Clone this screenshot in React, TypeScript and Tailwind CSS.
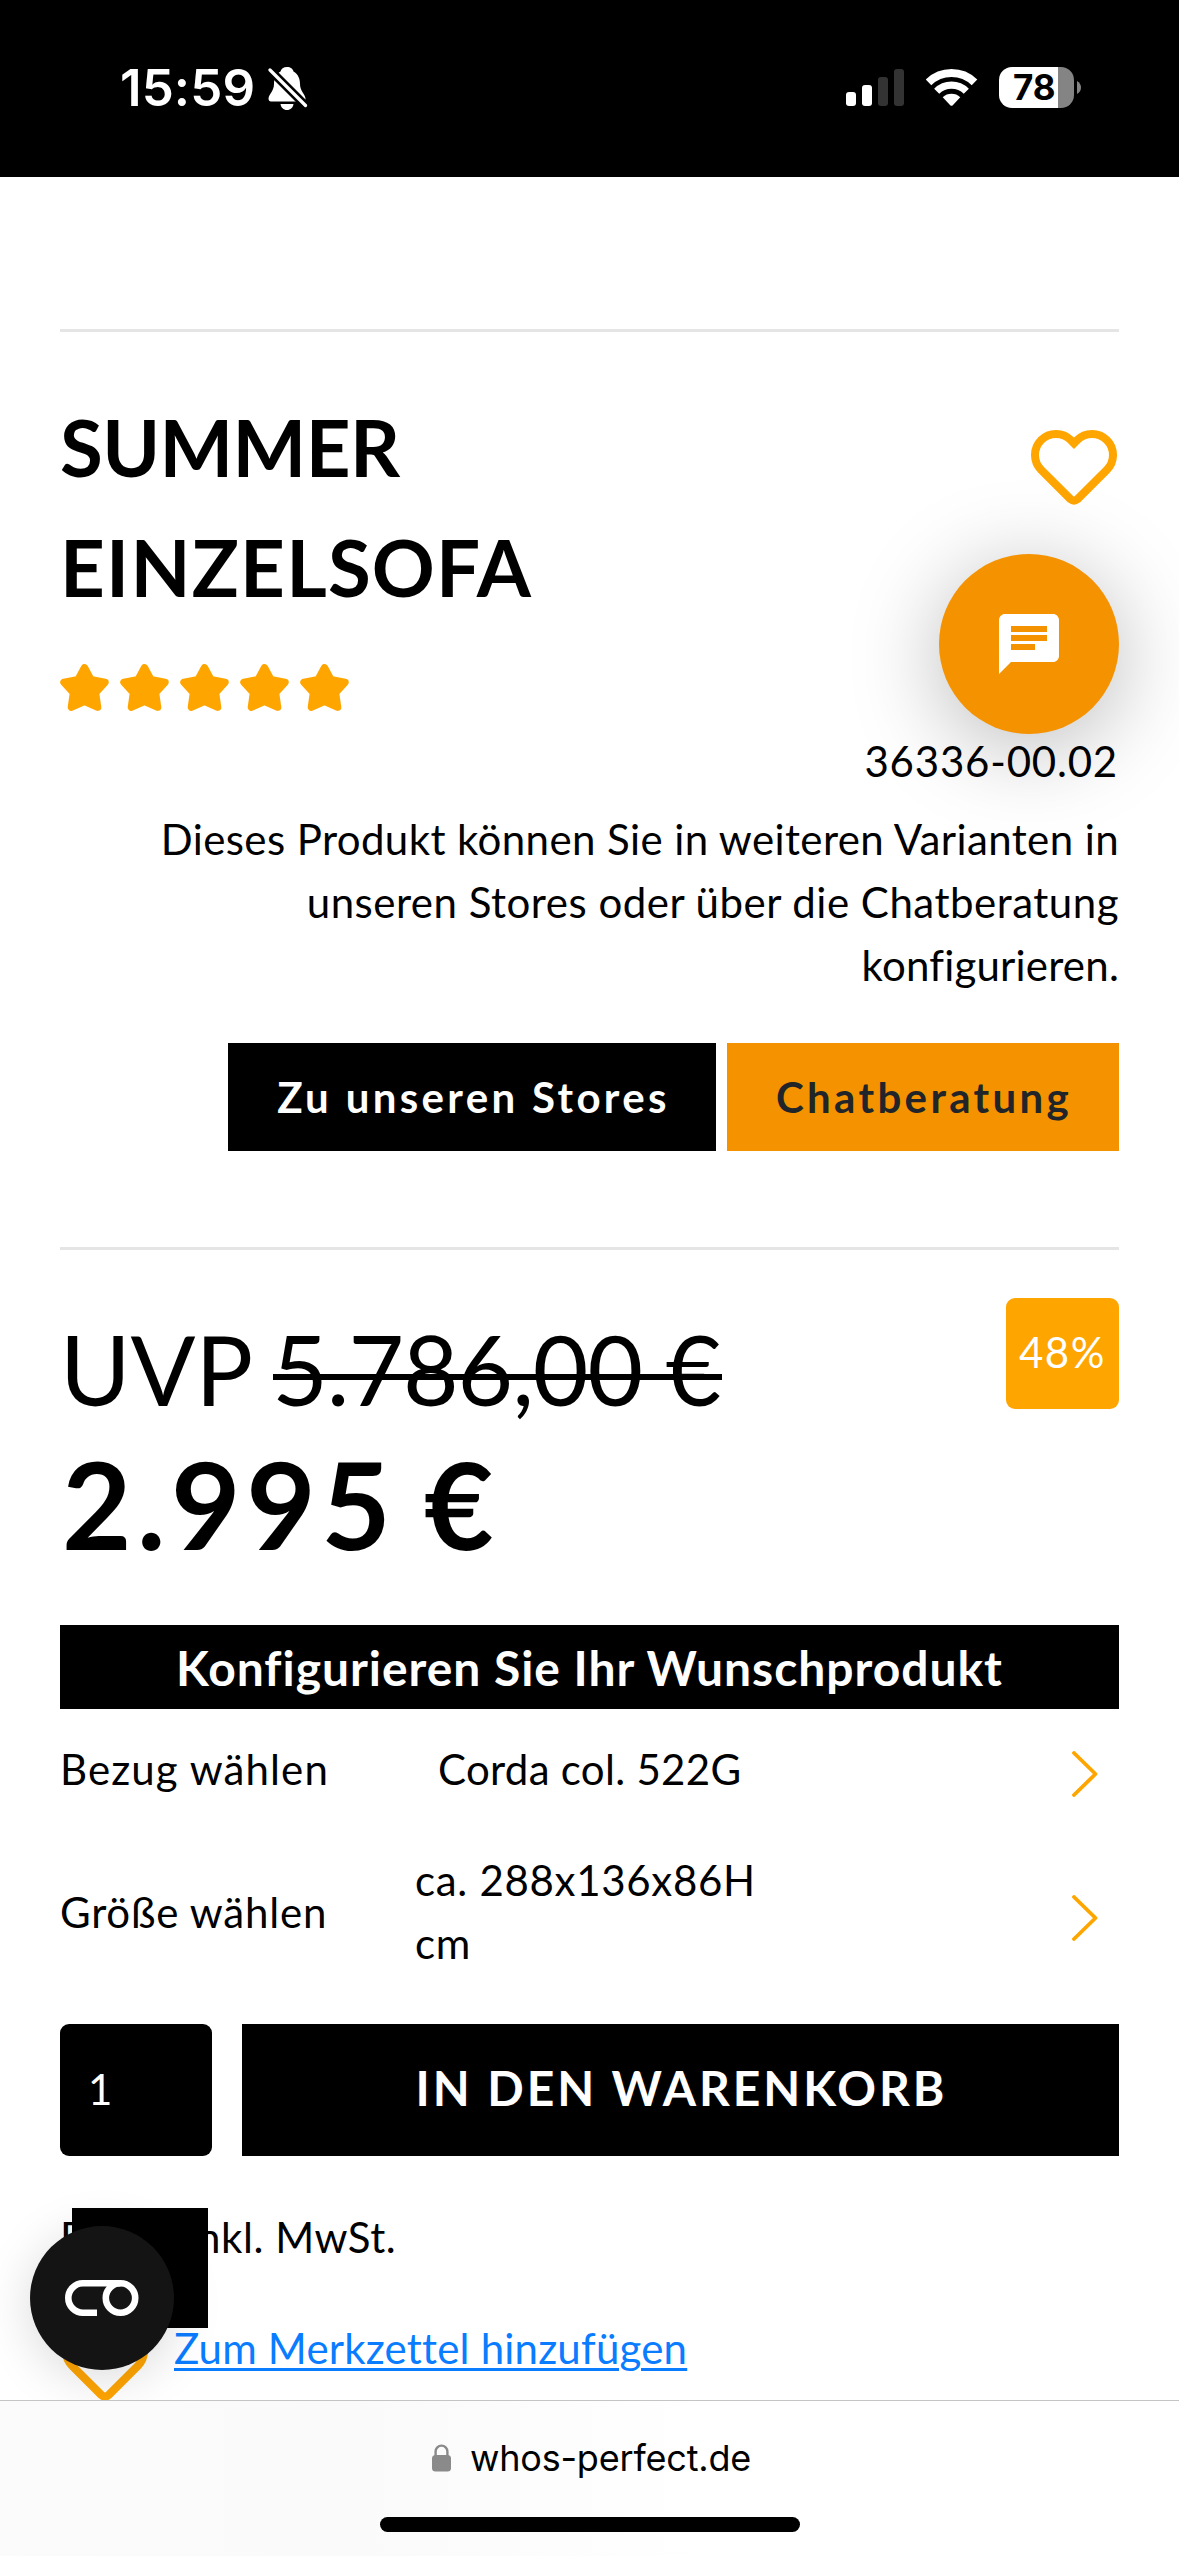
function Heart({ className = "" }: { className?: string }) {
  return (
    <svg className={"h-[75px] w-[86px] shrink-0 " + className} viewBox="0 0 86 75" fill="none" stroke="#ffa500" strokeWidth="8">
      <path d="M43 13.3 39.85 10.15A21 21 0 1 0 10.15 39.85L39.5 69.2Q43 72 46.5 69.2L75.85 39.85A21 21 0 1 0 46.15 10.15Z" />
    </svg>
  );
}

function Star() {
  return (
    <svg className="h-[47px] w-[49px]" viewBox="0 0 49 47" fill="#ffa500" stroke="#ffa500" strokeWidth="7.4" strokeLinejoin="round">
      <path d="M24.5 3.8 30.8 15.6 45 18.3 35.5 28.9 37.6 43.2 24.5 37.4 11.4 43.2 13.5 28.9 4 18.3 18.2 15.6Z" />
    </svg>
  );
}

function Chevron() {
  return (
    <svg className="mr-[21px] h-[46px] w-[26px]" viewBox="0 0 26 46" fill="none" stroke="#ffa500" strokeWidth="3.8" strokeLinecap="round" strokeLinejoin="round">
      <path d="M2 2 23.5 23 2 44" />
    </svg>
  );
}

function StatusBar() {
  return (
    <header className="flex h-[177px] shrink-0 items-start justify-between bg-black pr-[98px] pl-[120px] text-white">
      <div className="flex items-start pt-[58px]">
        <span className="w-[148px] font-['Inter'] text-[51px] leading-[60px] font-semibold tracking-[0.1px]">15:59</span>
        <svg className="mt-[8px] h-[45px] w-[40px]" viewBox="0 0 40 45">
          <path fill="#fff" d="M19 1C15.500 1 13 3 12.500 5.500 8 8 6 12.500 6 18 6 25 1 28 .5 32.500.5 34.500 1.500 35.500 3 35.500H35C36.500 35.500 37.500 34.500 37.500 32.500 37 28 32 25 32 18 32 12.500 30 8 25.500 5.500 25 3 22.500 1 19 1ZM12.500 38H25.500C25 41.500 22.500 44 19 44S13 41.500 12.500 38Z" />
          <path stroke="#000" strokeWidth="8.500" d="M0 2 40 42" />
          <path stroke="#fff" strokeWidth="3.200" strokeLinecap="round" d="M2 4 37.500 39.500" />
        </svg>
      </div>
      <div className="flex items-start pt-[67px]">
        <svg className="h-[41px] w-[59px]" viewBox="0 0 59 41">
          <rect x="0" y="25" width="10" height="14" rx="3" fill="#fff" />
          <rect x="16" y="18" width="10" height="21" rx="3" fill="#fff" />
          <rect x="32" y="10" width="10" height="29" rx="3" fill="#333" />
          <rect x="48" y="2" width="10" height="37" rx="3" fill="#333" />
        </svg>
        <svg className="ml-[21px] h-[41px] w-[52px]" viewBox="926 67 52 41" fill="none" stroke="#fff">
          <path strokeWidth="8" d="M928.500 82.400A33 33 0 0 1 974.500 82.400" />
          <path strokeWidth="7.200" d="M936.700 91.200A21 21 0 0 1 966.300 91.200" />
          <path stroke="none" fill="#fff" d="M942.700 97.300A13 13 0 0 1 960.300 97.300L952.500 105.400Q951.500 106.300 950.500 105.400Z" />
        </svg>
        <div className="ml-[21px] flex h-[41px] w-[75px] items-center overflow-hidden rounded-[13px] bg-[linear-gradient(90deg,#fff_59px,#848484_59px)] pl-[14px] font-['Inter'] text-[35px] font-bold tracking-[-0.2px] text-black">
          78
        </div>
        <svg className="mt-[14px] ml-[3px] h-[13px] w-[4px]" viewBox="0 0 4 13">
          <path fill="#848484" d="M0 0Q4 2.500 4 6.500T0 13Z" />
        </svg>
      </div>
    </header>
  );
}

export default function App() {
  return (
    <div className="flex h-[2556px] w-[1179px] flex-col overflow-hidden bg-white font-['Lato','Open_Sans',sans-serif] text-[42px] leading-[63px] text-black">
      <StatusBar />
      <main className="relative flex h-[2223px] shrink-0 flex-col overflow-hidden px-[60px]">
        <hr className="mt-[152px] h-[3px] shrink-0 border-0 bg-[#e5e5e5]" />
        <section className="mt-[55px] flex h-[240px] shrink-0 justify-between pr-[2px]">
          <h1 className="text-[78px] leading-[120px] font-bold">
            <span className="block tracking-[-0.6px]">SUMMER</span>
            <span className="block tracking-[1.2px]">EINZELSOFA</span>
          </h1>
          <Heart className="mt-[43px]" />
        </section>
        <div className="mt-[37px] flex h-[64px] shrink-0 gap-[11px]">
          <Star /><Star /><Star /><Star /><Star />
        </div>
        <div className="relative z-10 mt-[2px] flex flex-col items-end text-right">
          <p className="mr-[1px] tracking-[0.8px]">36336-00.02</p>
          <p className="mt-[15px] tracking-[0.4px]">
            Dieses Produkt können Sie in weiteren Varianten in
            <br />
            <span className="tracking-[0.5px]">unseren Stores oder über die Chatberatung</span>
            <br />
            <span className="tracking-[0.2px]">konfigurieren.</span>
          </p>
        </div>
        <div className="mt-[46px] flex h-[108px] shrink-0 justify-end gap-[11px] font-bold">
          <a className="flex w-[488px] items-center justify-center bg-black pl-[3px] tracking-[3.35px] text-white">Zu unseren Stores</a>
          <a className="flex w-[392px] items-center justify-center bg-[#f49200] pl-[2px] tracking-[3.35px] text-[#212529]">Chatberatung</a>
        </div>
        <hr className="mt-[96px] h-[3px] shrink-0 border-0 bg-[#e5e5e5]" />
        <section className="mt-[48px] flex h-[327px] shrink-0 justify-between">
          <div className="pt-[13px]">
            <p className="flex h-[121px] text-[96px] leading-[115px]">
              <span>UVP</span>
              <span className="relative ml-[19px] tracking-[-1.1px]">
                5.786,00 €
                <span className="absolute top-[63px] left-px h-[6px] w-[449px] bg-black" />
              </span>
            </p>
            <p className="pl-[2px] text-[120px] leading-[144px] font-bold tracking-[5.5px] [word-spacing:-7px]">2.995 €</p>
          </div>
          <div className="flex h-[111px] w-[113px] items-center justify-center rounded-[9px] bg-[#ffa500] pb-[3px] font-normal tracking-[1.6px] text-white">48%</div>
        </section>
        <h2 className="flex h-[84px] shrink-0 items-center justify-center bg-black text-[48px] font-bold tracking-[0.96px] text-white">
          Konfigurieren Sie Ihr Wunschprodukt
        </h2>
        <div className="mt-[29px] flex h-[63px] shrink-0 items-center">
          <span className="w-[378px] tracking-[1.1px]">Bezug wählen</span>
          <span className="grow tracking-[0.3px]">Corda col. 522G</span>
          <div className="mt-[9px]"><Chevron /></div>
        </div>
        <div className="mt-[48px] flex h-[126px] shrink-0 items-center">
          <span className="w-[355px] tracking-[0.8px]">Größe wählen</span>
          <span className="w-[360px] tracking-[0.7px]">ca. 288x136x86H cm</span>
          <div className="mt-[11px] ml-auto"><Chevron /></div>
        </div>
        <div className="mt-[49px] flex h-[132px] shrink-0 gap-[30px]">
          <div className="flex w-[152px] items-center rounded-[9px] bg-black pb-[2px] pl-[28px] text-white">1</div>
          <button className="flex grow items-center justify-center bg-black pb-[5px] pl-[2px] text-[48px] font-bold tracking-[2.95px] text-white">IN DEN WARENKORB</button>
        </div>
        <p className="mt-[50px] shrink-0 tracking-[0.55px]">Preise inkl. MwSt.</p>
        <div className="mt-[48px] flex shrink-0 items-start pl-[2px]">
          <Heart className="mt-[9px]" />
          <a className="ml-[26px] tracking-[0.2px] text-[#0a7cff] underline decoration-[3px] underline-offset-[4px]">Zum Merkzettel hinzufügen</a>
        </div>

        <div className="absolute top-[377px] right-[60px] flex size-[180px] items-center justify-center rounded-full bg-[#f49200] shadow-[0_14px_90px_rgba(0,0,0,0.27)]">
          <svg className="size-[72px]" viewBox="0 0 24 24" fill="#fff">
            <path d="M20 2H4c-1.100 0-1.990.9-1.990 2L2 22l4-4h14c1.100 0 2-.9 2-2V4c0-1.100-.9-2-2-2zM6 9h12v2H6V9zm8 5H6v-2h8v2zm4-6H6V6h12v2z" />
          </svg>
        </div>
        <div className="absolute top-[2031px] left-[72px] h-[120px] w-[136px] bg-black" />
        <button className="absolute top-[2049px] left-[30px] flex size-[144px] items-center justify-center rounded-full bg-[#141414] shadow-[0_8px_50px_rgba(0,0,0,0.15)]">
          <svg className="h-[36px] w-[74px]" viewBox="0 0 74 36" fill="none" stroke="#fff" strokeWidth="6.600">
            <path d="M32 32.700H18A14.700 14.700 0 0 1 18 3.300H55.500" />
            <circle cx="55.500" cy="18" r="14.700" />
          </svg>
        </button>
      </main>
      <footer className="flex grow flex-col items-center border-t border-[#c4c4c4] bg-[linear-gradient(90deg,#fbfbfb,#fafafa_30%,#fff_60%)]">
        <div className="mt-[33px] flex h-[48px] items-center pl-[4px] font-['Inter'] text-[36px] leading-[48px]">
          <svg className="mr-[18px] h-[28px] w-[20px]" viewBox="0 0 20 28">
            <rect y="11" width="19" height="16.500" rx="3.500" fill="#8a8a8a" />
            <path d="M3.600 13V7.500a5.900 5.900 0 0 1 11.800 0V13" fill="none" stroke="#8a8a8a" strokeWidth="2.400" />
          </svg>
          <span className="tracking-[-0.2px]">whos-perfect.de</span>
        </div>
        <div className="mt-[35px] h-[15px] w-[420px] rounded-full bg-black" />
      </footer>
    </div>
  );
}
